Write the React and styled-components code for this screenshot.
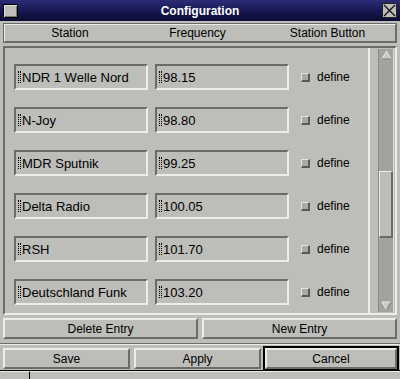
import React from "react";
import styled, { createGlobalStyle, css } from "styled-components";

const GlobalStyle = createGlobalStyle`
  html, body {
    margin: 0;
    padding: 0;
    background: #bdbdb9;
  }
  body {
    font-family: "Liberation Sans", "DejaVu Sans", Arial, sans-serif;
    font-size: 12px;
    color: #000;
  }
`;

const LIGHT = "#ececea";
const DARK = "#6b6b69";
const FACE = "#bdbdb9";

const raised = css`
  border-top: 2px solid ${LIGHT};
  border-left: 2px solid ${LIGHT};
  border-bottom: 2px solid ${DARK};
  border-right: 2px solid ${DARK};
`;

const sunken = css`
  border-top: 2px solid ${DARK};
  border-left: 2px solid ${DARK};
  border-bottom: 2px solid ${LIGHT};
  border-right: 2px solid ${LIGHT};
`;

const Window = styled.div`
  width: 400px;
  height: 379px;
  display: flex;
  flex-direction: column;
  background: ${FACE};
  box-sizing: border-box;
  overflow: hidden;
`;

const TitleBar = styled.div`
  height: 21px;
  flex: none;
  display: flex;
  align-items: center;
  padding: 0 3px;
  background: linear-gradient(180deg, #2c2c78 0%, #14144a 60%, #0c0c36 100%);
`;

const Title = styled.div`
  flex: 1;
  text-align: center;
  color: #fff;
  font-weight: bold;
  font-size: 12px;
`;

const SysButton = styled.div`
  width: 13px;
  height: 12px;
  background: ${FACE};
  border: 1px solid #000;
  box-shadow: inset 1px 1px 0 #e0e0e0, inset -1px -1px 0 #777;
`;

const CloseButton = styled.div`
  width: 15px;
  height: 15px;
  background: ${FACE};
  border: 1px solid #222;
  display: flex;
  align-items: center;
  justify-content: center;
  box-sizing: border-box;
`;

const Body = styled.div`
  flex: 1;
  display: flex;
  flex-direction: column;
  padding: 2px 3px 0 3px;
`;

const Header = styled.div`
  ${raised};
  height: 20px;
  box-sizing: border-box;
  display: grid;
  grid-template-columns: 130px 125px 1fr;
  align-items: center;
  outline: 1px solid ${DARK};
  outline-offset: -1px;
`;

const HeaderCell = styled.div`
  text-align: center;
  font-size: 12px;
`;

const Frame = styled.div`
  margin-top: 3px;
  height: 269px;
  box-sizing: border-box;
  border-top: 2px solid ${DARK};
  border-left: 2px solid ${DARK};
  border-bottom: 2px solid ${LIGHT};
  border-right: 2px solid ${LIGHT};
  display: flex;
  padding-right: 1px;
`;

const Viewport = styled.div`
  flex: 1;
  display: flex;
  flex-direction: column;
  gap: 17px;
  padding: 16px 0 0 9px;
  border-right: 2px solid ${LIGHT};
  margin-right: 8px;
  overflow: hidden;
`;

const EntryRow = styled.div`
  display: flex;
  align-items: center;
  height: 26px;
`;

const Field = styled.div`
  ${sunken};
  box-sizing: border-box;
  width: ${(p) => p.$w}px;
  height: 26px;
  margin-right: ${(p) => p.$gap || 0}px;
  display: flex;
  align-items: center;
  padding-left: 2px;
  font-size: 13px;
  white-space: nowrap;
`;

const Caret = styled.span`
  display: inline-block;
  width: 3px;
  height: 12px;
  margin-right: 1px;
  border-left: 1px dotted #000;
  border-right: 1px dotted #000;
  box-sizing: border-box;
`;

const CheckBox = styled.span`
  width: 9px;
  height: 9px;
  box-sizing: border-box;
  background: #a9a9a6;
  border-top: 1px solid #e4e4e2;
  border-left: 1px solid #e4e4e2;
  border-bottom: 2px solid #5a5a58;
  border-right: 2px solid #5a5a58;
  margin: 0 7px 0 12px;
`;

const Label = styled.span`
  font-size: 12px;
`;

const Scrollbar = styled.div`
  width: 14px;
  margin: 1px 0;
  background: #a2a29f;
  display: flex;
  flex-direction: column;
  border-left: 1px solid #8a8a88;
  border-right: 1px solid #dcdcda;
`;

const Arrow = styled.div`
  height: 12px;
  flex: none;
  display: flex;
  align-items: center;
  justify-content: center;
`;

const Thumb = styled.div`
  ${raised};
  border-width: 1px 2px 2px 1px;
  box-sizing: border-box;
  background: ${FACE};
  height: 67px;
  margin-top: ${(p) => p.$top}px;
`;

const Spacer = styled.div`
  flex: 1;
`;

const ButtonRow = styled.div`
  display: grid;
  grid-template-columns: ${(p) => p.$cols};
  gap: 4px;
  margin-top: ${(p) => p.$mt}px;
`;

const Button = styled.div`
  ${raised};
  box-sizing: border-box;
  height: ${(p) => p.$h || 21}px;
  display: flex;
  align-items: center;
  justify-content: center;
  font-size: 12px;
  background: ${FACE};
  ${(p) =>
    p.$default &&
    css`
      outline: 2px solid #000;
      outline-offset: 0;
    `}
`;

const Separator = styled.div`
  height: 0;
  margin-top: 4px;
  border-top: 1px solid ${DARK};
  border-bottom: 1px solid ${LIGHT};
  margin-left: -3px;
  margin-right: -3px;
`;

const StatusBar = styled.div`
  height: 8px;
  flex: none;
  border-top: 1px solid #000;
  display: flex;
`;

const StatusCell = styled.div`
  width: ${(p) => (p.$w ? p.$w + "px" : "auto")};
  flex: ${(p) => (p.$w ? "none" : 1)};
  border-top: 1px solid ${LIGHT};
  border-left: 1px solid ${(p) => (p.$first ? FACE : "#000")};
`;

const stations = [
  ["NDR 1 Welle Nord", "98.15"],
  ["N-Joy", "98.80"],
  ["MDR Sputnik", "99.25"],
  ["Delta Radio", "100.05"],
  ["RSH", "101.70"],
  ["Deutschland Funk", "103.20"],
];

const Triangle = ({ up }) => (
  <svg width="11" height="10" viewBox="0 0 11 10">
    <polygon
      points={up ? "5.5,1 10,9 1,9" : "1,1 10,1 5.5,9"}
      fill="#c8c8c5"
      stroke="#e8e8e6"
      strokeWidth="1"
    />
    <polyline
      points={up ? "10,9 1,9" : "10,1 5.5,9"}
      fill="none"
      stroke="#6a6a68"
      strokeWidth="1"
    />
  </svg>
);

export default function App() {
  return (
    <Window>
      <GlobalStyle />
      <TitleBar>
        <SysButton />
        <Title>Configuration</Title>
        <CloseButton>
          <svg width="13" height="13" viewBox="0 0 13 13">
            <path d="M1 1 L12 12 M12 1 L1 12" stroke="#111" strokeWidth="1.3" />
          </svg>
        </CloseButton>
      </TitleBar>
      <Body>
        <Header>
          <HeaderCell>Station</HeaderCell>
          <HeaderCell>Frequency</HeaderCell>
          <HeaderCell>Station Button</HeaderCell>
        </Header>
        <Frame>
          <Viewport>
            {stations.map(([name, freq]) => (
              <EntryRow key={name}>
                <Field $w={134} $gap={7}>
                  <Caret />
                  {name}
                </Field>
                <Field $w={134}>
                  <Caret />
                  {freq}
                </Field>
                <CheckBox />
                <Label>define</Label>
              </EntryRow>
            ))}
          </Viewport>
          <Scrollbar>
            <Arrow>
              <Triangle up />
            </Arrow>
            <Thumb $top={110} />
            <Spacer />
            <Arrow>
              <Triangle />
            </Arrow>
          </Scrollbar>
        </Frame>
        <ButtonRow $cols="1fr 1fr" $mt={3}>
          <Button>Delete Entry</Button>
          <Button>New Entry</Button>
        </ButtonRow>
        <Separator />
        <ButtonRow $cols="127px 127px 1fr" $mt={3}>
          <Button>Save</Button>
          <Button>Apply</Button>
          <Button $default>Cancel</Button>
        </ButtonRow>
      </Body>
      <StatusBar>
        <StatusCell $w={28} $first />
        <StatusCell />
      </StatusBar>
    </Window>
  );
}
